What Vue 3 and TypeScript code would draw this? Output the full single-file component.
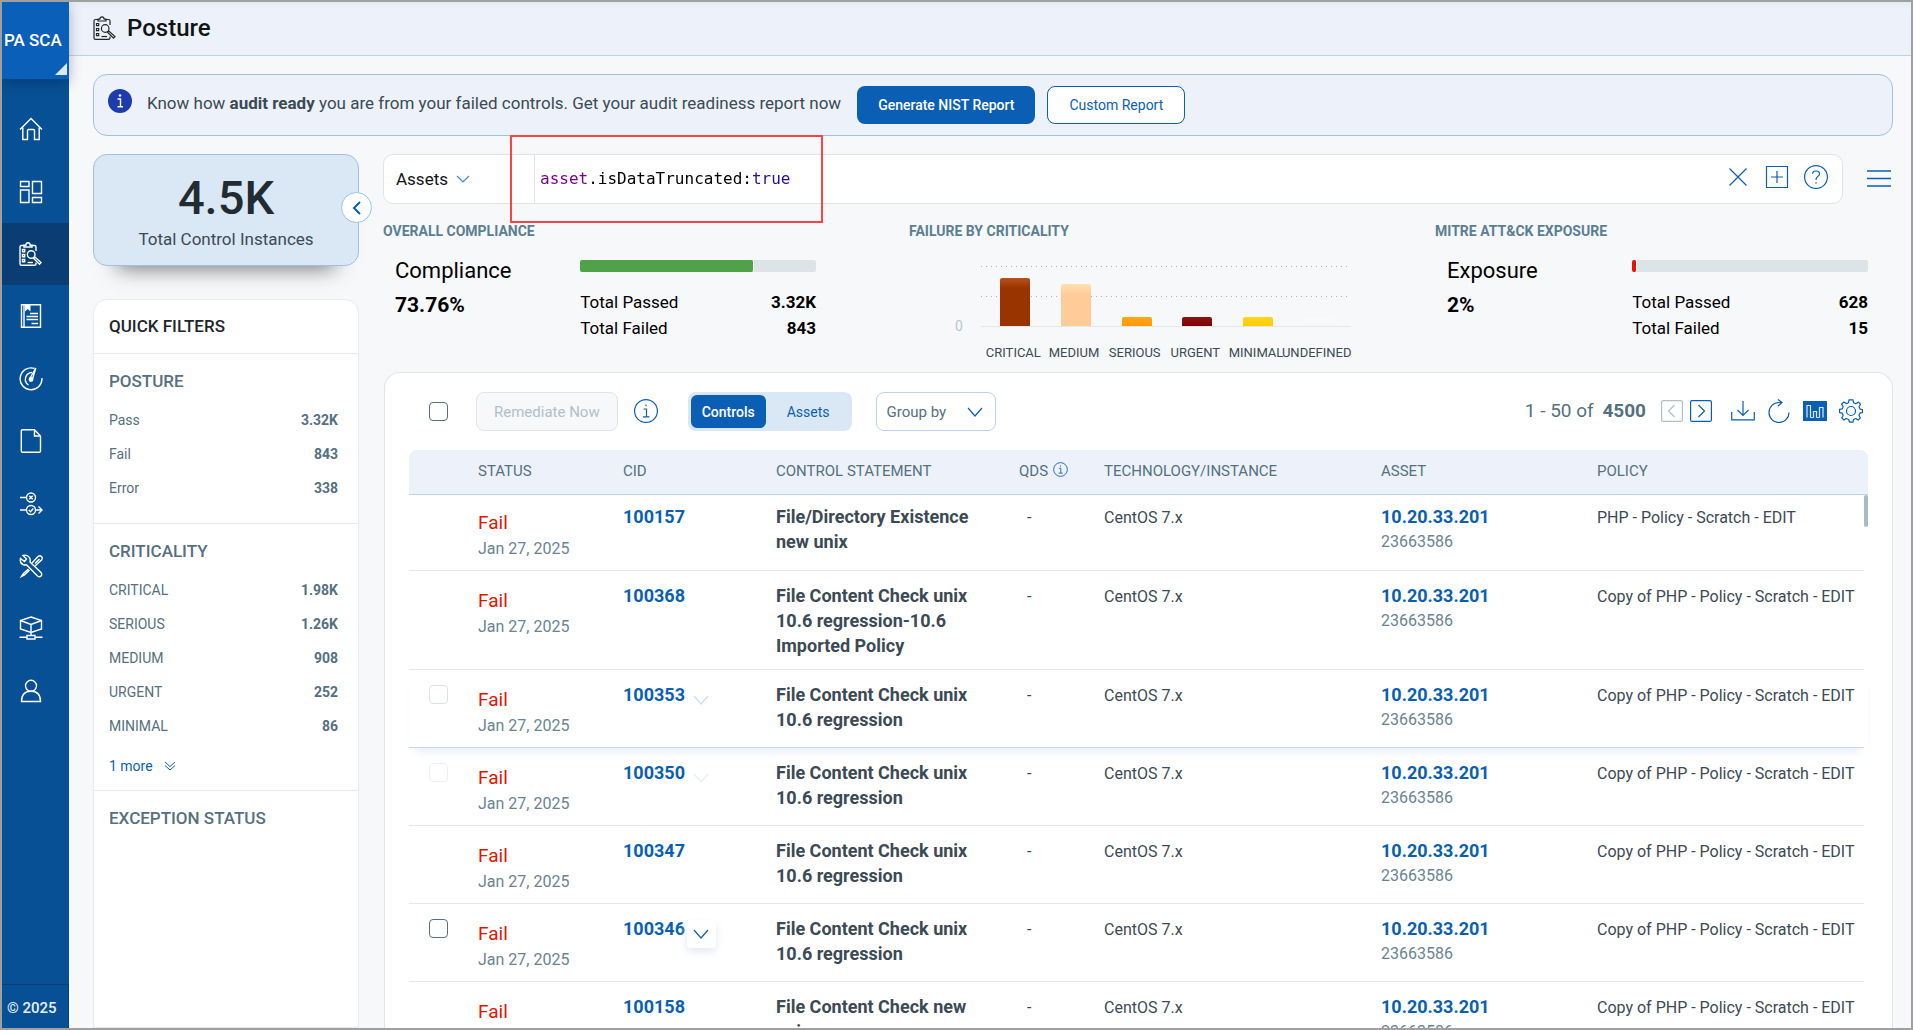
<script setup lang="ts">
import { ref } from 'vue'

interface NavItem { name: string; paths: string[]; solid?: string }
interface Row {
  cid: string
  statement: string
  policy: string
  tools?: 'full' | 'dim' | 'faint'
  hovered?: boolean
}

const clipboard: string[] = [
  'M5 3.5H2.5Q1 3.5 1 5V22Q1 23.300 2.500 23.300H15.500Q17 23.300 17 22V20.500',
  'M13 3.500H15.500Q17 3.500 17 5V9',
  'M5 5V3.200H6.800Q7 .8 9 .8Q11 .8 11.200 3.200H13V5Z',
  'M3.500 7.500h2.200v2.200H3.500Z M3.500 12.500h2.200v2.200H3.500Z M3.500 17.500h2.200v2.200H3.500Z',
  'M8.500 20.500H14',
  'M16 12.500a3.800 3.800 0 1 1-7.600 0a3.800 3.800 0 1 1 7.600 0Z',
  'M14.500 16.200L15.800 15L22 20.500L20.500 22.200Z'
]

const navItems: NavItem[] = [
  { name: 'Home', paths: ['M1 12.500L12 1.500L23 12.500', 'M3.800 10.500V22.500H8.500V13.500Q8.500 12.500 9.500 12.500H14.500Q15.500 12.500 15.500 13.500V22.500H20.200V10.500'] },
  { name: 'Dashboard', paths: ['M1.500 1.500H10V6.500H1.500Z', 'M1.500 10H10V22.500H1.500Z', 'M13.500 1.500H22.500V13.500H13.500Z', 'M13.500 17.500H22.500V22.500H13.500Z'] },
  { name: 'Posture', paths: clipboard },
  { name: 'Policies', paths: ['M2.500 .8H21.500V23.200H2.500Z', 'M5 .8V23', 'M11 9.500H19 M7.500 12.500H19 M7.500 15.500H19 M12.500 19.500H19'], solid: 'M6 1H11.500V7.500L8.750 5L6 7.500Z' },
  { name: 'Reports', paths: ['M15.500 1.500A10.900 10.900 0 1 0 22.900 11', 'M13 5.500A6.800 6.800 0 0 0 9.500 18', 'M10.500 12L16.800 1L13.500 12'], solid: 'M14.400 12.500a2.400 2.400 0 1 1-4.800 0a2.400 2.400 0 1 1 4.800 0Z' },
  { name: 'Documents', paths: ['M3.500 .8H15.500L21.500 7V22Q21.500 23.200 20.300 23.200H3.500Q2.300 23.200 2.300 22V2Q2.300 .8 3.500 .8Z', 'M15.500 1V7H21.500'] },
  { name: 'Exceptions', paths: ['M1 5.500H7.500 M1 18H7.500', 'M16.500 5.500a4.500 4.500 0 1 1-9 0a4.500 4.500 0 1 1 9 0Z', 'M16.500 18a4.500 4.500 0 1 1-9 0a4.500 4.500 0 1 1 9 0Z', 'M10.300 3.800L13.700 7.200M13.700 3.800L10.300 7.200', 'M9.800 18L11.500 19.700L14.300 16.500', 'M16.500 18H22.500 M19.500 14.500L23 18L19.500 21.500'] },
  { name: 'Remediation', paths: ['M4 1.500L7.500 5L5.500 7.500L1.500 4.500Q.5 9 4 10.500Q6 11.300 7.500 10.800L18.500 22Q20.500 23.500 22 22Q23.500 20.500 22 18.500L11 8Q11.800 5 10 3Q7.500 .3 4 1.500Z', 'M13 9L19 2.500Q21 1 22.500 2.500Q24 4 22.500 6L16 12', 'M16 9.500L20.500 5', 'M9.500 15L4.500 19.500L2.500 22.500L5.500 21L10.500 16'] },
  { name: 'Network', paths: ['M12 1L22.500 4.500V13L12 16.500L1.500 13V4.500Z', 'M1.500 4.500L12 8.500L22.500 4.500 M12 8.500V19', 'M8 19.500H16V23H8Z', 'M.5 21.300H8 M16 21.300H23.500'] },
  { name: 'Users', paths: ['M17.500 6.800a5.500 5.500 0 1 1-11 0a5.500 5.500 0 1 1 11 0Z', 'M2.500 22.500Q2.500 12.300 12 12.300Q21.500 12.300 21.500 22.500Z'] }
]

const postureFilters = [
  { label: 'Pass', value: '3.32K' },
  { label: 'Fail', value: '843' },
  { label: 'Error', value: '338' }
]
const criticalityFilters = [
  { label: 'CRITICAL', value: '1.98K' },
  { label: 'SERIOUS', value: '1.26K' },
  { label: 'MEDIUM', value: '908' },
  { label: 'URGENT', value: '252' },
  { label: 'MINIMAL', value: '86' }
]

const bars = [
  { label: 'CRITICAL', height: 48, color: '#993300', cap: '#b9531d' },
  { label: 'MEDIUM', height: 42, color: '#ffcc99', cap: '#ffe2b0' },
  { label: 'SERIOUS', height: 9, color: '#ff9900', cap: '#ffa51c' },
  { label: 'URGENT', height: 9, color: '#800000', cap: '#8c1414' },
  { label: 'MINIMAL', height: 9, color: '#ffcc00', cap: '#ffd51c' },
  { label: 'UNDEFINED', height: 8, color: '#f5f5f5', cap: '#fbfbfb' }
]

const rows: Row[] = [
  { cid: '100157', statement: 'File/Directory Existence new unix', policy: 'PHP - Policy - Scratch - EDIT' },
  { cid: '100368', statement: 'File Content Check unix 10.6 regression-10.6 Imported Policy', policy: 'Copy of PHP - Policy - Scratch - EDIT' },
  { cid: '100353', statement: 'File Content Check unix 10.6 regression', policy: 'Copy of PHP - Policy - Scratch - EDIT', tools: 'dim', hovered: true },
  { cid: '100350', statement: 'File Content Check unix 10.6 regression', policy: 'Copy of PHP - Policy - Scratch - EDIT', tools: 'faint' },
  { cid: '100347', statement: 'File Content Check unix 10.6 regression', policy: 'Copy of PHP - Policy - Scratch - EDIT' },
  { cid: '100346', statement: 'File Content Check unix 10.6 regression', policy: 'Copy of PHP - Policy - Scratch - EDIT', tools: 'full' },
  { cid: '100158', statement: 'File Content Check new unix', policy: 'Copy of PHP - Policy - Scratch - EDIT' }
]

const query = ref('asset.isDataTruncated:true')
const scope = ref('Assets')
const groupBy = ref('')
const view = ref<'Controls' | 'Assets'>('Controls')
</script>

<template>
  <div class="frame">
    <aside class="rail">
      <button class="app-switch" type="button">PA SCA</button>
      <nav class="rail-nav" aria-label="Main">
        <a v-for="item in navItems" :key="item.name" href="#" :aria-label="item.name" :class="{ active: item.name === 'Posture' }">
          <svg viewBox="0 0 24 24" class="icon"><path v-for="d in item.paths" :key="d" :d="d" /><path v-if="item.solid" :d="item.solid" class="solid" /></svg>
        </a>
      </nav>
      <div class="copyright">© 2025</div>
    </aside>

    <div class="page">
      <header class="topbar">
        <svg viewBox="0 0 24 24" class="icon"><path v-for="d in clipboard" :key="d" :d="d" /></svg>
        <h1>Posture</h1>
      </header>

      <section class="banner">
        <svg viewBox="0 0 24 24" class="banner-info">
          <circle cx="12" cy="12" r="12" fill="#1d3cab" />
          <circle cx="12" cy="6.500" r="1.200" fill="#fff" />
          <path d="M9.500 10H12.500V17.500M9.500 17.800H15" fill="none" stroke="#fff" stroke-width="1.400" />
        </svg>
        <p>Know how <b>audit ready</b> you are from your failed controls. Get your audit readiness report now</p>
        <button type="button" class="primary">Generate NIST Report</button>
        <button type="button" class="outline">Custom Report</button>
      </section>

      <div class="body">
        <aside class="side">
          <section class="total">
            <strong>4.5K</strong>
            <span>Total Control Instances</span>
            <button type="button" class="collapse" aria-label="Collapse filters">
              <svg viewBox="0 0 16 16"><path d="M11 2L5 8L11 14" /></svg>
            </button>
          </section>

          <section class="filters">
            <h2>QUICK FILTERS</h2>
            <div class="group">
              <h3>POSTURE</h3>
              <a v-for="f in postureFilters" :key="f.label" href="#"><span>{{ f.label }}</span><b>{{ f.value }}</b></a>
            </div>
            <div class="group crit">
              <h3>CRITICALITY</h3>
              <a v-for="f in criticalityFilters" :key="f.label" href="#"><span>{{ f.label }}</span><b>{{ f.value }}</b></a>
              <button type="button" class="more">1 more
                <svg viewBox="0 0 12 12"><path d="M1 2L6 6.500L11 2M1 5.500L6 10L11 5.500" /></svg>
              </button>
            </div>
            <div class="group"><h3>EXCEPTION STATUS</h3></div>
          </section>
        </aside>

        <main class="content">
          <div class="search-row">
            <div class="search">
              <label class="scope">
                <select v-model="scope" aria-label="Search scope"><option>Assets</option></select>
                <svg viewBox="0 0 14 8"><path d="M1 1L7 7L13 1" /></svg>
              </label>
              <input v-model="query" type="text" aria-label="Search query" spellcheck="false" />
              <div class="search-tools">
                <button type="button" aria-label="Clear"><svg viewBox="0 0 24 24"><path d="M3.500 3.500L20.500 20.500M20.500 3.500L3.500 20.500" /></svg></button>
                <button type="button" aria-label="Save query"><svg viewBox="0 0 24 24"><path d="M1.500 1.500H22.500V22.500H1.500ZM6 12H18M12 6V18" /></svg></button>
                <button type="button" aria-label="Help"><svg viewBox="0 0 24 24"><circle cx="12" cy="12" r="11.400" /><path d="M8.500 8.800Q8.700 6 12 6Q15.500 6 15.500 8.800Q15.500 10.500 13.500 11.700Q12 12.700 12 15M12 17.300V18.800" /></svg></button>
              </div>
              <div class="highlight"></div>
            </div>
            <button type="button" class="menu" aria-label="Menu"><svg viewBox="0 0 24 24"><path d="M0 4H24M0 11.500H24M0 19H24" /></svg></button>
          </div>

          <div class="metrics">
            <section>
              <h4>OVERALL COMPLIANCE</h4>
              <div class="metric">
                <div class="score"><span>Compliance</span><b>73.76%</b></div>
                <div class="totals">
                  <div class="track"><div class="fill green" :style="{ width: '73.76%' }"></div></div>
                  <p><span>Total Passed</span><b>3.32K</b></p>
                  <p><span>Total Failed</span><b>843</b></p>
                </div>
              </div>
            </section>
            <section>
              <h4>FAILURE BY CRITICALITY</h4>
              <div class="chart">
                <div class="axis">0</div>
                <div class="plot">
                  <div class="bars">
                    <div v-for="b in bars" :key="b.label" class="slot">
                      <div class="bar" :style="{ height: b.height + 'px', background: `linear-gradient(${b.cap}, ${b.color} 10px)` }"></div>
                    </div>
                  </div>
                  <div class="labels"><span v-for="b in bars" :key="b.label">{{ b.label }}</span></div>
                </div>
              </div>
            </section>
            <section>
              <h4>MITRE ATT&amp;CK EXPOSURE</h4>
              <div class="metric">
                <div class="score"><span>Exposure</span><b>2%</b></div>
                <div class="totals">
                  <div class="track"><div class="fill red" :style="{ width: '2%' }"></div></div>
                  <p><span>Total Passed</span><b>628</b></p>
                  <p><span>Total Failed</span><b>15</b></p>
                </div>
              </div>
            </section>
          </div>

          <section class="card">
            <div class="toolbar">
              <input type="checkbox" aria-label="Select all" />
              <button type="button" class="remediate" disabled>Remediate Now</button>
              <button type="button" class="plain" aria-label="Remediation info">
                <svg viewBox="0 0 24 24"><circle cx="12" cy="12" r="11.400" /><path d="M9.500 10H12.500V17.500M9 17.800H15.500M12 5.500V7.200" /></svg>
              </button>
              <div class="segment">
                <button type="button" :class="{ on: view === 'Controls' }" @click="view = 'Controls'">Controls</button>
                <button type="button" :class="{ on: view === 'Assets' }" @click="view = 'Assets'">Assets</button>
              </div>
              <label class="group-by">
                <select v-model="groupBy" aria-label="Group by"><option value="">Group by</option></select>
                <svg viewBox="0 0 16 10"><path d="M1 1L8 9L15 1" /></svg>
              </label>
              <div class="count">1 - 50 of <b>4500</b></div>
              <div class="pager">
                <button type="button" class="prev" aria-label="Previous page"><svg viewBox="0 0 22 22"><rect x=".6" y=".6" width="20.800" height="20.800" rx="1.500" /><path d="M13.500 5L7.500 11L13.500 17" /></svg></button>
                <button type="button" aria-label="Next page"><svg viewBox="0 0 22 22"><rect x=".6" y=".6" width="20.800" height="20.800" rx="1.500" /><path d="M8.500 5L14.500 11L8.500 17" /></svg></button>
              </div>
              <div class="actions">
                <button type="button" aria-label="Download"><svg viewBox="0 0 24 24"><path d="M.7 13V20.800H23.300V13M12 2V16.500M6.500 11L12 16.500L17.500 11" /></svg></button>
                <button type="button" aria-label="Refresh"><svg viewBox="0 0 24 24"><path d="M22 13.500A10 10 0 1 1 12 3.500H15M11 .5L15 3.500L11 7" /></svg></button>
                <button type="button" aria-label="Toggle charts"><svg viewBox="0 0 24 24"><path d="M0 2H24V22H0Z" fill="#0a5fb5" stroke="none" /><path d="M4 18.500V6.500H7.500V18.500M10.500 18.500V12.500H13.500V18.500M16.500 18.500V8.500H20V18.500M7.500 18.500H10.500M13.500 18.500H16.500" stroke="#dce9f6" /></svg></button>
                <button type="button" aria-label="Settings"><svg viewBox="0 0 24 24"><circle cx="12" cy="12" r="4.500" /><path d="M10 .8H14L14.600 3.800L17 4.800L19.500 3.100L21.600 5.300L20 7.800L21 10.100L23.400 10.500V13.700L20.900 14.200L19.900 16.500L21.400 18.900L19.100 21.100L16.800 19.500L14.500 20.500L14 23.200H10.400L9.700 20.500L7.300 19.500L4.900 21L2.700 18.800L4.200 16.500L3.200 14.200L.6 13.600V10.400L3.300 9.900L4.200 7.600L2.600 5.200L4.900 3L7.300 4.600L9.500 3.700Z" stroke-linejoin="round" /></svg></button>
              </div>
            </div>

            <div class="grid">
              <table>
                <colgroup>
                  <col class="c-check" /><col class="c-status" /><col class="c-cid" /><col class="c-stmt" /><col class="c-qds" /><col class="c-tech" /><col class="c-asset" /><col class="c-policy" />
                </colgroup>
                <thead>
                  <tr>
                    <th></th><th>STATUS</th><th>CID</th><th>CONTROL STATEMENT</th>
                    <th class="qds"><span>QDS</span><svg viewBox="0 0 24 24"><circle cx="12" cy="12" r="11" /><path d="M9.500 10H12.500V17.500M9 17.800H15.500M12 5.500V7.500" /></svg></th>
                    <th>TECHNOLOGY/INSTANCE</th><th>ASSET</th><th>POLICY</th>
                  </tr>
                </thead>
                <tbody>
                  <tr v-for="r in rows" :key="r.cid" :class="{ hovered: r.hovered }">
                    <td><input v-if="r.tools" type="checkbox" :class="r.tools" :aria-label="'Select ' + r.cid" /></td>
                    <td class="status"><span class="fail">Fail</span><span class="sub">Jan 27, 2025</span></td>
                    <td class="strong">
                      <div class="cid">
                        <a href="#">{{ r.cid }}</a>
                        <button v-if="r.tools" type="button" :class="r.tools" :aria-label="'Actions for ' + r.cid"><svg viewBox="0 0 16 10"><path d="M1 1L8 9L15 1" /></svg></button>
                      </div>
                    </td>
                    <td class="strong stmt">{{ r.statement }}</td>
                    <td class="dash">-</td>
                    <td>CentOS 7.x</td>
                    <td class="strong asset"><a href="#">10.20.33.201</a><span class="sub">23663586</span></td>
                    <td>{{ r.policy }}</td>
                  </tr>
                </tbody>
              </table>
              <div class="scroll"><div class="thumb"></div></div>
            </div>
          </section>
        </main>
      </div>
    </div>
  </div>
</template>

<style>
body { margin: 0; }
</style>

<style scoped>
* { box-sizing: border-box; }
.frame {
  display: flex;
  height: 100vh;
  overflow: hidden;
  border: 2px solid #a0a0a0;
  background: #f7f8fa;
  font-family: Roboto, "Liberation Sans", sans-serif;
  color: #3b4a54;
}
h1, h2, h3, h4, p { margin: 0; font-weight: 500; }
a { text-decoration: none; }
button, select, input { font-family: inherit; margin: 0; }
button { padding: 0; border: 0; background: none; cursor: pointer; }
svg { display: block; flex: none; fill: none; stroke: #0a5fb5; stroke-width: 1.2; }
b { font-weight: 700; }

.rail { flex: none; width: 67px; display: flex; flex-direction: column; background: #075095; }
.app-switch {
  position: relative;
  height: 77px;
  padding: 0 0 2px 2px;
  background: #0a5fb8;
  color: #fff;
  font-size: 17px;
  line-height: 20px;
  font-weight: 500;
  text-align: left;
  white-space: nowrap;
  box-shadow: 0 4px 12px rgba(0, 20, 60, .3);
}
.app-switch::after {
  content: "";
  position: absolute;
  right: 2px;
  bottom: 4px;
  border-left: 12px solid transparent;
  border-bottom: 12px solid #dce8f5;
}
.rail-nav { display: grid; grid-template-rows: repeat(10, 1fr); height: 624px; margin-top: 19px; }
.rail-nav a { display: flex; align-items: center; padding-left: 17px; }
.rail-nav a.active { background: #0a3d73; }
.icon { width: 24px; height: 24px; stroke: #fff; stroke-width: 1.4; }
.solid { fill: #fff; stroke: none; }
.copyright {
  margin-top: auto;
  height: 44px;
  padding-left: 5px;
  border-top: 1px solid #0a3d73;
  border-right: 1px solid #0a3d73;
  color: #e8f0f8;
  font-size: 15px;
  font-weight: 500;
  line-height: 46px;
}

.page { flex: 1; min-width: 0; display: flex; flex-direction: column; }
.topbar {
  flex: none;
  display: flex;
  align-items: center;
  gap: 10px;
  height: 54px;
  padding: 0 24px 2px;
  border-bottom: 1px solid #bdd2ea;
  background: #edf2fa;
  box-shadow: inset 0 5px 6px -3px #dfe9f2;
}
.topbar .icon { stroke: #1d262c; stroke-width: 1.2; }
h1 { font-size: 24px; line-height: 28px; color: #101417; }

.banner {
  flex: none;
  display: flex;
  align-items: center;
  margin: 18px 18px 0 24px;
  height: 62px;
  padding: 0 14px;
  border: 1px solid #a0c0e2;
  border-radius: 14px;
  background: #edf2fa;
}
.banner-info { width: 24px; height: 24px; margin-bottom: 8px; stroke: none; }
.banner p { margin: 0 16px 4px 15px; font-size: 17px; line-height: 20px; font-weight: 400; white-space: nowrap; }
.banner button { height: 38px; border-radius: 8px; font-size: 14px; font-weight: 500; white-space: nowrap; }
.primary { padding: 0 21px; background: #0a5fb5; color: #fff; }
.banner .outline { margin-left: 12px; padding: 0 21px; border: 1px solid #0a5fb5; background: #fff; color: #0a5fb5; font-weight: 400; }

.body { flex: 1; min-height: 0; display: flex; gap: 24px; margin-top: 18px; padding: 0 18px 0 24px; }
.side { flex: none; width: 266px; display: flex; flex-direction: column; gap: 33px; }
.total {
  position: relative;
  flex: none;
  display: flex;
  flex-direction: column;
  align-items: center;
  height: 112px;
  padding-top: 16px;
  border: 1px solid #a0c0e2;
  border-radius: 14px;
  background: #dae7f5;
  box-shadow: 0 26px 20px -24px rgba(0, 0, 0, .55);
}
.total strong { font-size: 47px; line-height: 54px; font-weight: 500; color: #222b31; }
.total span { font-size: 17px; line-height: 28px; }
.collapse {
  position: absolute;
  right: -14px;
  top: 37px;
  display: grid;
  place-items: center;
  width: 31px;
  height: 31px;
  border: 1px solid #a0c0e2;
  border-radius: 50%;
  background: #fff;
}
.collapse svg { width: 16px; height: 16px; stroke-width: 2; }
.filters { flex: 1; border: 1px solid #e6ebee; border-radius: 14px 14px 0 0; background: #fff; }
h2 { height: 54px; padding-left: 15px; border-bottom: 1px solid #e6ebee; font-size: 17px; line-height: 53px; color: #1d262c; }
.group { padding: 12px 20px 0 15px; height: 170px; border-bottom: 1px solid #e6ebee; }
.group:last-child { border: 0; }
.group.crit { height: 267px; }
h3 { font-size: 17px; line-height: 30px; margin-bottom: 7px; color: #557080; }
.group a { display: flex; justify-content: space-between; font-size: 14px; line-height: 34px; color: #557080; }
.more { display: flex; align-items: center; gap: 11px; margin-top: 6px; font-size: 14px; line-height: 34px; color: #0a5fb5; }
.more svg { width: 12px; height: 12px; stroke-width: 1; }

.content { flex: 1; min-width: 0; display: flex; flex-direction: column; }
.search-row { flex: none; display: flex; align-items: center; gap: 24px; }
.search { position: relative; flex: 1; display: flex; height: 50px; border: 1px solid #dfe4e8; border-radius: 10px; background: #fff; }
.scope { display: flex; align-items: center; width: 151px; padding-left: 12px; border-right: 1px solid #dfe4e8; }
select { appearance: none; border: 0; padding: 0; background: none; outline: 0; }
.scope select { width: 60px; font-size: 17px; color: #101417; }
.scope svg { width: 14px; height: 8px; stroke: #3d8bd0; }
.search input {
  flex: 1;
  min-width: 0;
  padding: 0 5px 2px;
  border: 0;
  outline: 0;
  font-family: "DejaVu Sans Mono", monospace;
  font-size: 16px;
  color: #000;
  background: linear-gradient(to right, #770088 5ch, #000 5ch, #000 22ch, #221199 22ch) content-box;
  -webkit-background-clip: text;
  background-clip: text;
  background-origin: content-box;
  -webkit-text-fill-color: transparent;
}
.search-tools { display: flex; align-items: center; gap: 15px; padding: 0 14px 4px 0; }
.search-tools svg, .menu svg { width: 24px; height: 24px; }
.menu { margin-right: 2px; }
.menu svg { stroke-width: 1.5; }
.highlight { position: absolute; left: 126px; top: -20px; width: 313px; height: 88px; border: 2px solid #ff4242; pointer-events: none; }

.metrics { flex: none; display: grid; grid-template-columns: repeat(3, 1fr); gap: 68px; height: 168px; padding-top: 17px; }
h4 { font-size: 14px; line-height: 20px; font-weight: 700; color: #5b7f92; }
.metric { display: flex; justify-content: space-between; padding: 13px 25px 0 12px; color: #000; }
.score { display: flex; flex-direction: column; font-size: 22px; line-height: 34px; }
.score b { font-size: 21px; }
.totals { width: 56%; padding-top: 6px; font-size: 17px; line-height: 26px; }
.totals p { display: flex; justify-content: space-between; font-weight: 400; }
.track { height: 12px; margin-bottom: 17px; border-radius: 2px; background: #dde4e8; }
.fill { height: 12px; border-radius: 2px; border-right: 1px solid #fff; }
.green { background: #4fa247; }
.red { background: #e51400; }
.chart { display: flex; padding: 24px 16px 0 46px; }
.axis { width: 26px; padding-top: 51px; font-size: 14px; line-height: 20px; color: #b9c5cc; }
.plot { flex: 1; min-width: 0; }
.bars {
  display: flex;
  height: 62px;
  padding: 0 2px 0 4px;
  border-bottom: 1px solid #e3e8ec;
  background:
    repeating-linear-gradient(to right, #a9b5bc 0 1px, transparent 1px 5px) 0 1px / 100% 1px no-repeat,
    repeating-linear-gradient(to right, #a9b5bc 0 1px, transparent 1px 5px) 0 31px / 100% 1px no-repeat;
}
.slot { flex: 1; display: flex; align-items: flex-end; justify-content: center; }
.bar { width: 30px; border-radius: 2px 2px 0 0; }
.labels { display: flex; padding: 16px 4px 0 2px; font-size: 13px; line-height: 20px; }
.labels span { flex: 1 1 0; width: 0; display: flex; justify-content: center; white-space: nowrap; }

.card { flex: 1; min-height: 0; margin-left: 1px; padding: 19px 24px 0; border: 1px solid #dfe5ea; border-bottom: 0; border-radius: 16px 16px 0 0; background: #fff; }
.toolbar { display: flex; align-items: center; height: 39px; margin-bottom: 19px; padding: 0 5px 0 20px; }
input[type="checkbox"] { appearance: none; flex: none; display: block; width: 19px; height: 19px; border: 1px solid #557080; border-radius: 4px; background: #fff; }
.remediate { height: 39px; margin-left: 28px; padding: 0 17px; border: 1px solid #dfe4e8; border-radius: 8px; background: #f7f8fa; font-size: 15px; color: #b3bfc6; white-space: nowrap; }
.plain { margin-left: 16px; padding-bottom: 2px; }
.plain svg, .actions svg { width: 24px; height: 24px; }
.segment { display: flex; height: 39px; margin-left: 30px; padding: 3px; border-radius: 8px; background: #dae7f5; }
.segment button { padding: 0 19px 0 21px; border-radius: 6px; font-size: 14px; color: #0a5fb5; }
.segment button.on { padding: 0 11px; background: #0a5fb5; color: #fff; font-weight: 500; }
.group-by { display: flex; align-items: center; height: 39px; width: 120px; margin-left: 24px; padding: 0 12px 0 10px; border: 1px solid #bcd5ee; border-radius: 8px; }
.group-by select { flex: 1; min-width: 0; font-size: 15px; color: #557080; }
.group-by svg { width: 16px; height: 10px; }
.count { margin-left: auto; font-size: 19px; color: #557080; white-space: nowrap; }
.count b { margin-left: 4px; }
.count, .pager, .actions { padding-bottom: 2px; }
.pager { display: flex; gap: 7px; margin-left: 15px; }
.pager svg { width: 22px; height: 22px; }
.pager .prev svg { stroke: #b3bfc6; }
.actions { display: flex; gap: 12px; margin-left: 19px; }

.grid { position: relative; }
table { width: 100%; table-layout: fixed; border-collapse: separate; border-spacing: 0; }
.c-check { width: 69px; }
.c-status { width: 145px; }
.c-cid { width: 153px; }
.c-stmt { width: 243px; }
.c-qds { width: 85px; }
.c-tech { width: 277px; }
.c-asset { width: 216px; }
.c-policy { width: 271px; }
th { height: 45px; padding: 0 0 2px; border-bottom: 1px solid #bcd5ee; background: #edf2fa; font-size: 15px; font-weight: 400; text-align: left; color: #557080; white-space: nowrap; }
th:first-child { border-top-left-radius: 8px; }
th:last-child { border-top-right-radius: 8px; }
.qds span, .qds svg { display: inline-block; vertical-align: middle; }
.qds svg { width: 15px; height: 15px; margin: 0 0 4px 5px; stroke-width: 1.4; }
td { padding: 13px 0 0; border-bottom: 1px solid #e3e9ec; vertical-align: top; font-size: 16px; line-height: 25px; white-space: nowrap; }
td > input[type="checkbox"] { margin: 2px 0 0 20px; }
td.strong { padding-top: 12px; font-size: 18px; font-weight: 700; }
td.status { padding: 16px 0 9px; }
tbody tr:first-child td { padding-top: 10px; }
tbody tr:first-child td.strong { padding-top: 9px; }
tbody tr:first-child td.status { padding-top: 14px; }
.fail { display: block; font-size: 19px; line-height: 27px; color: #e51400; }
.sub { display: block; font-size: 16px; font-weight: 400; color: #6a8494; }
.strong a { color: #0a5fb5; }
.cid { display: flex; gap: 2px; height: 25px; }
.cid button { display: grid; place-items: center; width: 29px; height: 28px; margin-top: 4px; border-radius: 4px; background: #fff; box-shadow: 0 4px 8px #e3eaf4; }
.cid svg { width: 16px; height: 10px; }
.dim { opacity: .2; }
.faint { opacity: .1; }
.cid button.dim, .cid button.faint { box-shadow: none; }
td.stmt { padding: 12px 34px 11px 0; white-space: normal; }
td.dash { padding-left: 8px; }
.hovered { box-shadow: 0 8px 10px -6px #dfe9f6; }
.hovered td { border-bottom-color: #c9d9e6; }
.scroll { position: absolute; top: 45px; right: 0; bottom: 0; width: 4px; background: #fff; }
.thumb { width: 4px; height: 32px; border-radius: 2px; background: #a9bac6; }
</style>
